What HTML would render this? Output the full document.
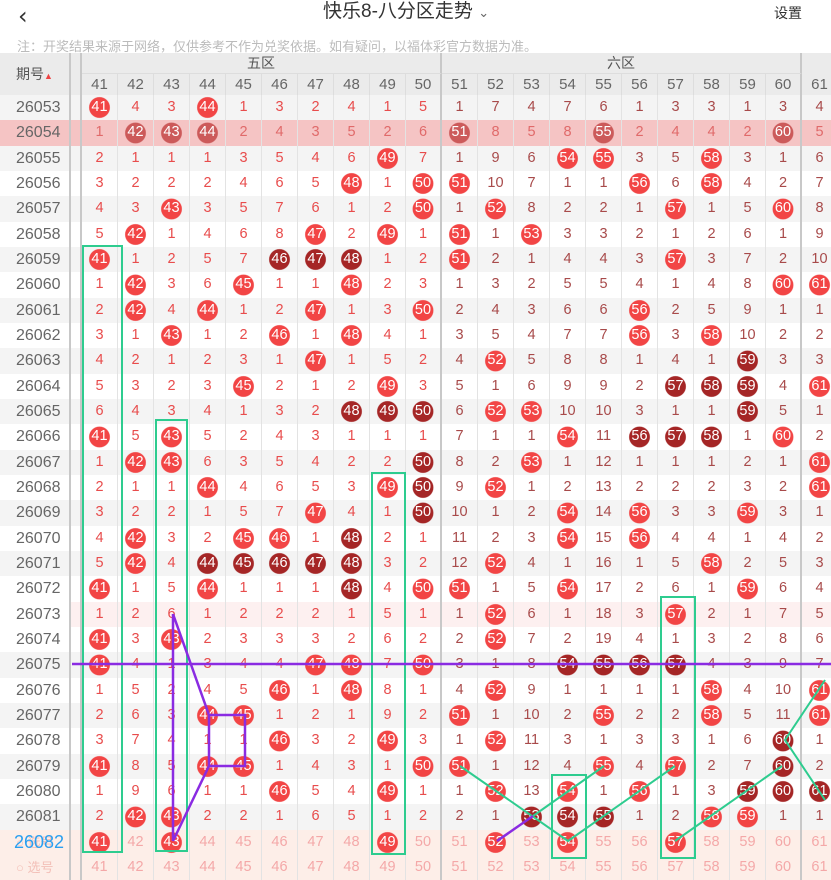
<!DOCTYPE html>
<html><head><meta charset="utf-8"><style>
*{margin:0;padding:0;box-sizing:border-box}
body{width:831px;height:865px;overflow:hidden;background:#fff;font-family:"Liberation Sans","Noto Sans CJK SC",sans-serif;position:relative}
.top{position:absolute;left:0;top:0;width:831px;height:53px;background:#fff}
.back{position:absolute;left:18px;top:2px;font-size:24px;color:#333;font-family:"DejaVu Sans",sans-serif}
.title{position:absolute;left:323px;top:0;font-size:19px;color:#333;line-height:24px}
.set{position:absolute;left:774px;top:3px;font-size:14px;color:#333}
.note{position:absolute;left:17px;top:36px;font-size:13px;color:#bbb}
.tb{position:absolute;left:0;top:53px;width:831px;overflow:hidden}
.hd,.r{display:grid;grid-template-columns:71px 11px repeat(21,36px);width:850px}
.hd{grid-template-rows:21px 21px;background:#ebebeb}
.hd>span{text-align:center;border-right:1px solid #ddd;color:#666;font-size:15px;line-height:21px}
.hd>span.z{color:#555;font-size:14px;border-right:2px solid #c8c8c8;border-bottom:1px solid #ddd}
.hd>span.k{border-right:2px solid #c8c8c8}
.r{height:25.33px;line-height:25.33px;font-size:14.5px;text-align:center}
.r>*{border-right:1px solid #e3e3e3;font-style:normal;font-weight:normal;text-decoration:none;display:block}
.r s{color:#666;font-size:16px;text-align:left;padding-left:16px;background:#fff;border-right:2px solid #c8c8c8}
.r u{border-right:2px solid #c8c8c8}
.r>*:nth-child(12){border-right:2px solid #c8c8c8}
.r>*:nth-child(22){border-right:2px solid #c8c8c8}
.r i{color:#e84c4c}
.r i:nth-child(n+13){color:#a84a4a}
.r b{color:#fff;background:radial-gradient(circle at 50% 50%,#f24545 10px,rgba(242,69,69,0) 10.8px)}
.r b.d{background:radial-gradient(circle at 50% 50%,#a52626 10px,rgba(165,38,38,0) 10.8px)}
.g{background:#f4f4f4}
.g s{background:#f4f4f4}
.pk{background:#f5c4c4}
.pk s{background:#f5c4c4}
.pk i{color:#e06a6a!important}
.pk b{background:radial-gradient(circle at 50% 50%,#cc5a5a 10px,rgba(204,90,90,0) 10.8px)!important}
.lp{background:#fdf0f0}
.pr{background:#fdeee8}
.pr s{background:#fdeee8;color:#f3c0b8;font-size:13px}
.pr i{color:#f4a8a8!important}
</style></head><body>
<div class="top">
<div class="back">&#x2039;</div>
<div class="title">快乐8-八分区走势 <span style="font-size:13px;color:#666">&#8964;</span></div>
<div class="set">设置</div>
<div class="note">注：开奖结果来源于网络，仅供参考不作为兑奖依据。如有疑问，以福体彩官方数据为准。</div>
</div>
<div class="tb">
<div class="hd"><span class="k" style="grid-row:1/3;grid-column:1;line-height:42px;text-align:left;padding-left:16px;color:#555;font-size:14px">期号<b style="color:#e44;font-size:9px;font-weight:normal">▲</b></span><span class="k" style="grid-row:1/3;grid-column:2"></span><span class="z" style="grid-row:1;grid-column:3/13">五区</span><span class="z" style="grid-row:1;grid-column:13/23">六区</span><span style="grid-row:1;grid-column:23"></span><span style="grid-row:2;grid-column:3">41</span><span>42</span><span>43</span><span>44</span><span>45</span><span>46</span><span>47</span><span>48</span><span>49</span><span class="k">50</span><span>51</span><span>52</span><span>53</span><span>54</span><span>55</span><span>56</span><span>57</span><span>58</span><span>59</span><span class="k">60</span><span>61</span></div>
<div class="r g"><s>26053</s><u></u><b>41</b><i>4</i><i>3</i><b>44</b><i>1</i><i>3</i><i>2</i><i>4</i><i>1</i><i>5</i><i>1</i><i>7</i><i>4</i><i>7</i><i>6</i><i>1</i><i>3</i><i>3</i><i>1</i><i>3</i><i>4</i></div>
<div class="r pk"><s>26054</s><u></u><i>1</i><b>42</b><b>43</b><b>44</b><i>2</i><i>4</i><i>3</i><i>5</i><i>2</i><i>6</i><b>51</b><i>8</i><i>5</i><i>8</i><b>55</b><i>2</i><i>4</i><i>4</i><i>2</i><b>60</b><i>5</i></div>
<div class="r g"><s>26055</s><u></u><i>2</i><i>1</i><i>1</i><i>1</i><i>3</i><i>5</i><i>4</i><i>6</i><b>49</b><i>7</i><i>1</i><i>9</i><i>6</i><b>54</b><b>55</b><i>3</i><i>5</i><b>58</b><i>3</i><i>1</i><i>6</i></div>
<div class="r"><s>26056</s><u></u><i>3</i><i>2</i><i>2</i><i>2</i><i>4</i><i>6</i><i>5</i><b>48</b><i>1</i><b>50</b><b>51</b><i>10</i><i>7</i><i>1</i><i>1</i><b>56</b><i>6</i><b>58</b><i>4</i><i>2</i><i>7</i></div>
<div class="r g"><s>26057</s><u></u><i>4</i><i>3</i><b>43</b><i>3</i><i>5</i><i>7</i><i>6</i><i>1</i><i>2</i><b>50</b><i>1</i><b>52</b><i>8</i><i>2</i><i>2</i><i>1</i><b>57</b><i>1</i><i>5</i><b>60</b><i>8</i></div>
<div class="r"><s>26058</s><u></u><i>5</i><b>42</b><i>1</i><i>4</i><i>6</i><i>8</i><b>47</b><i>2</i><b>49</b><i>1</i><b>51</b><i>1</i><b>53</b><i>3</i><i>3</i><i>2</i><i>1</i><i>2</i><i>6</i><i>1</i><i>9</i></div>
<div class="r g"><s>26059</s><u></u><b>41</b><i>1</i><i>2</i><i>5</i><i>7</i><b class="d">46</b><b class="d">47</b><b class="d">48</b><i>1</i><i>2</i><b>51</b><i>2</i><i>1</i><i>4</i><i>4</i><i>3</i><b>57</b><i>3</i><i>7</i><i>2</i><i>10</i></div>
<div class="r"><s>26060</s><u></u><i>1</i><b>42</b><i>3</i><i>6</i><b>45</b><i>1</i><i>1</i><b>48</b><i>2</i><i>3</i><i>1</i><i>3</i><i>2</i><i>5</i><i>5</i><i>4</i><i>1</i><i>4</i><i>8</i><b>60</b><b>61</b></div>
<div class="r g"><s>26061</s><u></u><i>2</i><b>42</b><i>4</i><b>44</b><i>1</i><i>2</i><b>47</b><i>1</i><i>3</i><b>50</b><i>2</i><i>4</i><i>3</i><i>6</i><i>6</i><b>56</b><i>2</i><i>5</i><i>9</i><i>1</i><i>1</i></div>
<div class="r"><s>26062</s><u></u><i>3</i><i>1</i><b>43</b><i>1</i><i>2</i><b>46</b><i>1</i><b>48</b><i>4</i><i>1</i><i>3</i><i>5</i><i>4</i><i>7</i><i>7</i><b>56</b><i>3</i><b>58</b><i>10</i><i>2</i><i>2</i></div>
<div class="r g"><s>26063</s><u></u><i>4</i><i>2</i><i>1</i><i>2</i><i>3</i><i>1</i><b>47</b><i>1</i><i>5</i><i>2</i><i>4</i><b>52</b><i>5</i><i>8</i><i>8</i><i>1</i><i>4</i><i>1</i><b class="d">59</b><i>3</i><i>3</i></div>
<div class="r"><s>26064</s><u></u><i>5</i><i>3</i><i>2</i><i>3</i><b>45</b><i>2</i><i>1</i><i>2</i><b>49</b><i>3</i><i>5</i><i>1</i><i>6</i><i>9</i><i>9</i><i>2</i><b class="d">57</b><b class="d">58</b><b class="d">59</b><i>4</i><b>61</b></div>
<div class="r g"><s>26065</s><u></u><i>6</i><i>4</i><i>3</i><i>4</i><i>1</i><i>3</i><i>2</i><b class="d">48</b><b class="d">49</b><b class="d">50</b><i>6</i><b>52</b><b>53</b><i>10</i><i>10</i><i>3</i><i>1</i><i>1</i><b class="d">59</b><i>5</i><i>1</i></div>
<div class="r"><s>26066</s><u></u><b>41</b><i>5</i><b>43</b><i>5</i><i>2</i><i>4</i><i>3</i><i>1</i><i>1</i><i>1</i><i>7</i><i>1</i><i>1</i><b>54</b><i>11</i><b class="d">56</b><b class="d">57</b><b class="d">58</b><i>1</i><b>60</b><i>2</i></div>
<div class="r g"><s>26067</s><u></u><i>1</i><b>42</b><b>43</b><i>6</i><i>3</i><i>5</i><i>4</i><i>2</i><i>2</i><b class="d">50</b><i>8</i><i>2</i><b>53</b><i>1</i><i>12</i><i>1</i><i>1</i><i>1</i><i>2</i><i>1</i><b>61</b></div>
<div class="r"><s>26068</s><u></u><i>2</i><i>1</i><i>1</i><b>44</b><i>4</i><i>6</i><i>5</i><i>3</i><b>49</b><b class="d">50</b><i>9</i><b>52</b><i>1</i><i>2</i><i>13</i><i>2</i><i>2</i><i>2</i><i>3</i><i>2</i><b>61</b></div>
<div class="r g"><s>26069</s><u></u><i>3</i><i>2</i><i>2</i><i>1</i><i>5</i><i>7</i><b>47</b><i>4</i><i>1</i><b class="d">50</b><i>10</i><i>1</i><i>2</i><b>54</b><i>14</i><b>56</b><i>3</i><i>3</i><b>59</b><i>3</i><i>1</i></div>
<div class="r"><s>26070</s><u></u><i>4</i><b>42</b><i>3</i><i>2</i><b>45</b><b>46</b><i>1</i><b class="d">48</b><i>2</i><i>1</i><i>11</i><i>2</i><i>3</i><b>54</b><i>15</i><b>56</b><i>4</i><i>4</i><i>1</i><i>4</i><i>2</i></div>
<div class="r g"><s>26071</s><u></u><i>5</i><b>42</b><i>4</i><b class="d">44</b><b class="d">45</b><b class="d">46</b><b class="d">47</b><b class="d">48</b><i>3</i><i>2</i><i>12</i><b>52</b><i>4</i><i>1</i><i>16</i><i>1</i><i>5</i><b>58</b><i>2</i><i>5</i><i>3</i></div>
<div class="r"><s>26072</s><u></u><b>41</b><i>1</i><i>5</i><b>44</b><i>1</i><i>1</i><i>1</i><b class="d">48</b><i>4</i><b>50</b><b>51</b><i>1</i><i>5</i><b>54</b><i>17</i><i>2</i><i>6</i><i>1</i><b>59</b><i>6</i><i>4</i></div>
<div class="r lp"><s>26073</s><u></u><i>1</i><i>2</i><i>6</i><i>1</i><i>2</i><i>2</i><i>2</i><i>1</i><i>5</i><i>1</i><i>1</i><b>52</b><i>6</i><i>1</i><i>18</i><i>3</i><b>57</b><i>2</i><i>1</i><i>7</i><i>5</i></div>
<div class="r"><s>26074</s><u></u><b>41</b><i>3</i><b>43</b><i>2</i><i>3</i><i>3</i><i>3</i><i>2</i><i>6</i><i>2</i><i>2</i><b>52</b><i>7</i><i>2</i><i>19</i><i>4</i><i>1</i><i>3</i><i>2</i><i>8</i><i>6</i></div>
<div class="r g"><s>26075</s><u></u><b>41</b><i>4</i><i>1</i><i>3</i><i>4</i><i>4</i><b>47</b><b>48</b><i>7</i><b>50</b><i>3</i><i>1</i><i>8</i><b class="d">54</b><b class="d">55</b><b class="d">56</b><b class="d">57</b><i>4</i><i>3</i><i>9</i><i>7</i></div>
<div class="r"><s>26076</s><u></u><i>1</i><i>5</i><i>2</i><i>4</i><i>5</i><b>46</b><i>1</i><b>48</b><i>8</i><i>1</i><i>4</i><b>52</b><i>9</i><i>1</i><i>1</i><i>1</i><i>1</i><b>58</b><i>4</i><i>10</i><b>61</b></div>
<div class="r g"><s>26077</s><u></u><i>2</i><i>6</i><i>3</i><b>44</b><b>45</b><i>1</i><i>2</i><i>1</i><i>9</i><i>2</i><b>51</b><i>1</i><i>10</i><i>2</i><b>55</b><i>2</i><i>2</i><b>58</b><i>5</i><i>11</i><b>61</b></div>
<div class="r"><s>26078</s><u></u><i>3</i><i>7</i><i>4</i><i>1</i><i>1</i><b>46</b><i>3</i><i>2</i><b>49</b><i>3</i><i>1</i><b>52</b><i>11</i><i>3</i><i>1</i><i>3</i><i>3</i><i>1</i><i>6</i><b class="d">60</b><i>1</i></div>
<div class="r g"><s>26079</s><u></u><b>41</b><i>8</i><i>5</i><b>44</b><b>45</b><i>1</i><i>4</i><i>3</i><i>1</i><b>50</b><b>51</b><i>1</i><i>12</i><i>4</i><b>55</b><i>4</i><b>57</b><i>2</i><i>7</i><b class="d">60</b><i>2</i></div>
<div class="r"><s>26080</s><u></u><i>1</i><i>9</i><i>6</i><i>1</i><i>1</i><b>46</b><i>5</i><i>4</i><b>49</b><i>1</i><i>1</i><b>52</b><i>13</i><b>54</b><i>1</i><b>56</b><i>1</i><i>3</i><b class="d">59</b><b class="d">60</b><b class="d">61</b></div>
<div class="r g"><s>26081</s><u></u><i>2</i><b>42</b><b>43</b><i>2</i><i>2</i><i>1</i><i>6</i><i>5</i><i>1</i><i>2</i><i>2</i><i>1</i><b class="d">53</b><b class="d">54</b><b class="d">55</b><i>1</i><i>2</i><b>58</b><b>59</b><i>1</i><i>1</i></div>
<div class="r pr"><s>○ 选号</s><u></u><b>41</b><i>42</i><b>43</b><i>44</i><i>45</i><i>46</i><i>47</i><i>48</i><b>49</b><i>50</i><i>51</i><b>52</b><i>53</i><b>54</b><i>55</i><i>56</i><b>57</b><i>58</i><i>59</i><i>60</i><i>61</i></div>
<div class="r pr"><s>○ 选号</s><u></u><i>41</i><i>42</i><i>43</i><i>44</i><i>45</i><i>46</i><i>47</i><i>48</i><i>49</i><i>50</i><i>51</i><i>52</i><i>53</i><i>54</i><i>55</i><i>56</i><i>57</i><i>58</i><i>59</i><i>60</i><i>61</i></div>
</div>
<div style="position:absolute;left:14px;top:832px;font-size:18px;color:#2a9ff0">26082</div>
<svg width="831" height="865" style="position:absolute;left:0;top:0">
<g fill="none" stroke="#2ecc8f" stroke-width="2">
<rect x="83" y="246" width="39" height="606"/>
<rect x="156" y="420" width="31" height="431"/>
<rect x="372" y="473" width="33" height="381"/>
<rect x="552" y="775" width="34" height="83"/>
<rect x="661" y="597" width="34" height="261"/>
<path d="M460 766 L568 841 L675 766 M533 816 L604 766 M675 841 L782 766 M825 680 L785 740 L825 800"/>
</g>
<g fill="none" stroke="#8a2be2" stroke-width="2.5">
<path d="M72 664 L831 664"/>
<path d="M173 614 L173 841 M173 614 L209 715 L245 715 L245 766 L209 766 L173 841 M209 715 L209 766"/>
<path d="M497 841 L533 816"/>
</g>
</svg>
</body></html>
